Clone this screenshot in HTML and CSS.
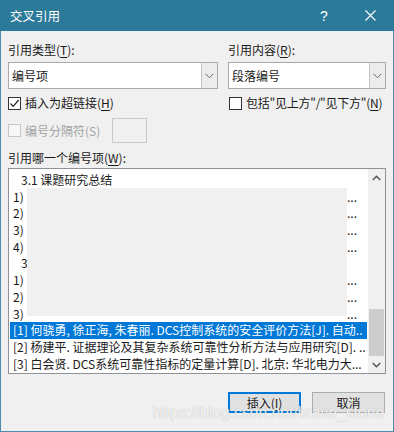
FILE: index.html
```html
<!DOCTYPE html>
<html lang="zh-CN">
<head>
  <meta charset="UTF-8" />
  <title>交叉引用</title>
  <link rel="stylesheet" href="styles.css">
</head>
<body>
  <div class="dialog">
    <div class="titlebar">
      <span class="title">交叉引用</span>
      <span class="tb-btn">?</span>
      <span class="tb-btn">
        <svg width="11" height="11" viewBox="0 0 11 11"><path d="M0.5 0.5 L10.5 10.5 M10.5 0.5 L0.5 10.5" stroke="#fff" stroke-width="1.1" fill="none"/></svg>
      </span>
    </div>

    <div class="body">
      <div class="top-grid">
        <div class="label">引用类型(<u>T</u>):</div>
        <div class="label">引用内容(<u>R</u>):</div>

        <div class="combo">
          <span class="combo-text">编号项</span>
          <span class="combo-btn"><svg width="9" height="6" viewBox="0 0 9 6"><path d="M0.5 0.8 L4.5 4.8 L8.5 0.8" stroke="#666" stroke-width="1" fill="none"/></svg></span>
        </div>
        <div class="combo">
          <span class="combo-text">段落编号</span>
          <span class="combo-btn"><svg width="9" height="6" viewBox="0 0 9 6"><path d="M0.5 0.8 L4.5 4.8 L8.5 0.8" stroke="#666" stroke-width="1" fill="none"/></svg></span>
        </div>

        <div class="check">
          <span class="box"><svg width="11" height="11" viewBox="0 0 11 11"><path d="M1.5 5.5 L4.2 8.3 L9.6 2" stroke="#222" stroke-width="1.2" fill="none"/></svg></span>
          插入为超链接(<u>H</u>)
        </div>
        <div class="check right">
          <span class="box"></span>
          <span class="tight">包括&quot;见上方&quot;/&quot;见下方&quot;(<u>N</u>)</span>
        </div>
      </div>

      <div class="sep-row">
        <div class="check disabled">
          <span class="box"></span>
          编号分隔符(S)
        </div>
        <div class="sep-box"></div>
      </div>

      <div class="label list-label">引用哪一个编号项(<u>W</u>):</div>

      <div class="list">
        <div class="rows">
          <div class="row indent">3.1 课题研究总结</div>
          <div class="row"><span>1)</span><span class="tail">...</span></div>
          <div class="row"><span>2)</span><span class="tail">...</span></div>
          <div class="row"><span>3)</span><span class="tail">...</span></div>
          <div class="row"><span>4)</span><span class="tail">...</span></div>
          <div class="row indent">3</div>
          <div class="row"><span>1)</span><span class="tail">...</span></div>
          <div class="row"><span>2)</span><span class="tail">...</span></div>
          <div class="row"><span>3)</span><span class="tail">...</span></div>
          <div class="row selected">[1] 何骁勇, 徐正海, 朱春丽. DCS控制系统的安全评价方法[J]. 自动..</div>
          <div class="row">[2] 杨建平. 证据理论及其复杂系统可靠性分析方法与应用研究[D]. ..</div>
          <div class="row">[3] 白会贤. DCS系统可靠性指标的定量计算[D]. 北京: 华北电力大...</div>
        </div>
        <div class="scrollbar">
          <span class="arrow"><svg width="9" height="6" viewBox="0 0 9 6"><path d="M0.8 5 L4.5 1.3 L8.2 5" stroke="#555" stroke-width="1.5" fill="none"/></svg></span>
          <span class="track"><span class="thumb"></span></span>
          <span class="arrow"><svg width="9" height="6" viewBox="0 0 9 6"><path d="M0.8 1 L4.5 4.7 L8.2 1" stroke="#555" stroke-width="1.5" fill="none"/></svg></span>
        </div>
        <div class="redacted"></div>
      </div>

      <div class="buttons">
        <button class="btn default">插入(<u>I</u>)</button>
        <button class="btn">取消</button>
      </div>
    </div>

    <div class="watermark">https://blog.csdn.net/brave_stone</div>
  </div>
</body>
</html>
```

FILE: styles.css
```css
* { box-sizing: border-box; }
body {
  margin: 0;
  background: #fff;
  font-family: "Noto Sans CJK SC", "Microsoft YaHei", sans-serif;
  font-size: 12px;
  color: #1a1a1a;
}
u { text-decoration-thickness: 1px; text-underline-offset: 2px; }
.dialog {
  position: relative;
  width: 394px;
  height: 432px;
  background: #f0f0f0;
  border: 1px solid #4d8cab;
  border-top: none;
}
.titlebar {
  display: flex;
  align-items: center;
  height: 31px;
  margin: 0 -1px;
  background: #2c7a9a;
  color: #fff;
}
.title {
  flex: 1;
  padding-left: 10px;
  font-size: 12.5px;
}
.tb-btn {
  width: 46px;
  height: 31px;
  display: flex;
  align-items: center;
  justify-content: center;
  font-size: 14px;
  font-family: "Liberation Sans", sans-serif;
}
.tb-btn:last-child { margin-right: 1px; }
.body {
  padding: 0 7px;
}
.top-grid {
  display: grid;
  grid-template-columns: 210px 158px;
  column-gap: 10px;
  margin-top: 11px;
}
.label {
  height: 16px;
  line-height: 16px;
  white-space: nowrap;
}
.combo {
  display: flex;
  height: 27px;
  margin-top: 4px;
  border: 1px solid #a9a9a9;
  background: #fff;
}
.combo-text {
  flex: 1;
  padding-left: 3px;
  line-height: 25px;
}
.combo-btn {
  width: 16px;
  display: flex;
  align-items: center;
  justify-content: center;
  background: #ececec;
  border-left: 1px solid #c4c4c4;
}
.check {
  display: flex;
  align-items: center;
  height: 16px;
  margin-top: 6px;
  line-height: 16px;
  white-space: nowrap;
}
.check.right { margin-left: 1px; }
.tight { letter-spacing: -0.25px; }
.box {
  width: 13px;
  height: 13px;
  margin-right: 4px;
  border: 1px solid #333;
  background: #fff;
  display: flex;
  align-items: center;
  justify-content: center;
}
.check.disabled { margin-top: 0; color: #a3a3a3; }
.check.disabled .box { border-color: #c6c6c6; background: #f7f7f7; }
.sep-row {
  display: grid;
  grid-template-columns: 104px 35px;
  align-items: center;
  height: 25px;
  margin-top: 7px;
}
.sep-box {
  height: 25px;
  border: 1px solid #c8c8c8;
  background: #f0f0f0;
}
.list-label { margin-top: 7px; }
.list {
  position: relative;
  display: flex;
  height: 206px;
  margin-top: 2px;
  border: 1px solid #8f9398;
  background: #fff;
}
.rows {
  flex: 1;
  min-width: 0;
  padding: 3px 1px 0;
}
.row {
  display: flex;
  height: 16.7px;
  line-height: 16.7px;
  padding: 0 10px 0 3px;
  white-space: nowrap;
  overflow: hidden;
}
.row.indent { padding-left: 11px; }
.row .tail { margin-left: auto; }
.row.selected {
  background: #0078d7;
  color: #fff;
  padding-right: 0;
}
.scrollbar {
  width: 17px;
  display: flex;
  flex-direction: column;
  background: #f0f0f0;
}
.arrow {
  height: 17px;
  display: flex;
  align-items: center;
  justify-content: center;
}
.track {
  flex: 1;
  display: flex;
  flex-direction: column;
  justify-content: flex-end;
  padding: 0 1px;
}
.thumb {
  height: 47px;
  background: #cdcdcd;
}
.redacted {
  position: absolute;
  left: 18px;
  top: 19px;
  width: 320px;
  height: 128px;
  background: #f0f0f0;
}
.buttons {
  display: flex;
  justify-content: flex-end;
  gap: 11px;
  margin-top: 18px;
  padding-right: 1px;
}
.btn {
  width: 73px;
  height: 21px;
  padding: 0;
  border: 1px solid #adadad;
  background: #e1e1e1;
  font-family: inherit;
  font-size: 12px;
  color: #1a1a1a;
}
.btn.default {
  border-color: #0078d7;
  box-shadow: inset 0 0 0 1px #0078d7;
}
.watermark {
  position: absolute;
  left: 152px;
  top: 403px;
  font-family: "Liberation Sans", Arial, sans-serif;
  font-size: 15.7px;
  line-height: 20px;
  color: rgba(255, 255, 255, 0.85);
  text-shadow: 0 0 1px rgba(110, 110, 110, 0.55);
  white-space: nowrap;
}
```
